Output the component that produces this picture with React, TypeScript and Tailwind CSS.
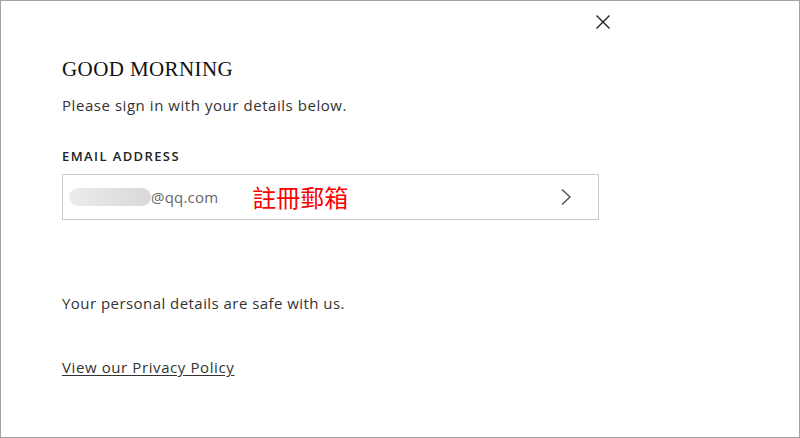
import React from "react";

export default function App() {
  const sans = { fontFamily: '"Open Sans", "Noto Sans", sans-serif' };
  return (
    <div className="w-[800px] h-[438px] border border-[#a3a3a3] bg-white overflow-hidden" style={sans}>
      <div className="pl-[61px] pt-[12px] w-[611px]">
        <div className="flex justify-end">
          <button className="w-[18px] h-[18px] flex items-center justify-center text-[#222]">
            <svg width="16" height="16" viewBox="0 0 16 16" fill="none" stroke="#222" strokeWidth="1.4">
              <path d="M1.5 1.5 L14.5 14.5 M14.5 1.5 L1.5 14.5" />
            </svg>
          </button>
        </div>
        <h1
          className="mt-[25px] text-[21px] leading-[26px] text-[#111] tracking-[0.4px]"
          style={{ fontFamily: '"Liberation Serif", "DejaVu Serif", serif' }}
        >
          GOOD MORNING
        </h1>
        <p className="mt-[13px] text-[15px] leading-[20px] text-[#333] tracking-[0.55px]">Please sign in with your details below.</p>
        <div className="mt-[33px] text-[13px] leading-[16px] font-semibold tracking-[1.4px] text-[#222]">EMAIL ADDRESS</div>
        <div className="mt-[10px] w-[537px] h-[46px] border border-[#c8c8c8] flex items-center pl-[6px] pr-[26px]">
          <div className="flex items-center">
            <div className="w-[82px] h-[18px] rounded-full bg-gradient-to-r from-[#ececec] via-[#e2e2e2] to-[#d8d8d8]" />
            <span className="text-[15px] text-[#666] leading-[18px] tracking-[0.2px]">@qq.com</span>
          </div>
          <span
            className="ml-[34px] text-[24px] leading-[28px] text-[#ff0000]"
            style={{ fontFamily: '"Noto Sans CJK TC", sans-serif' }}
          >
            註冊郵箱
          </span>
          <div className="ml-auto">
            <svg width="12" height="18" viewBox="0 0 12 18" fill="none" stroke="#555" strokeWidth="1.5">
              <path d="M2 1.5 L10 9 L2 16.5" />
            </svg>
          </div>
        </div>
        <p className="mt-[73px] text-[15px] leading-[20px] text-[#333] tracking-[0.45px]">Your personal details are safe with us.</p>
        <a className="inline-block mt-[44px] text-[15px] leading-[20px] text-[#333] underline underline-offset-2 tracking-[0.6px]">
          View our Privacy Policy
        </a>
      </div>
    </div>
  );
}
